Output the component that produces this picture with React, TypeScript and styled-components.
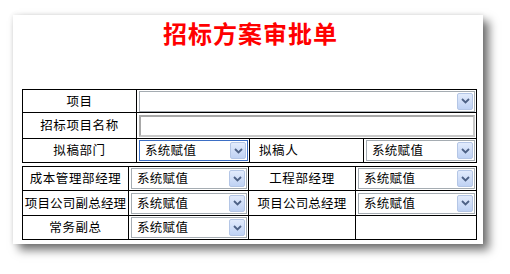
import React from "react";
import styled, { createGlobalStyle } from "styled-components";

const GlobalStyle = createGlobalStyle`
  html, body {
    margin: 0;
    padding: 0;
    background: #ffffff;
  }
  body {
    font-family: "Noto Sans CJK SC", "DejaVu Sans", sans-serif;
    font-size: 13px;
    color: #000;
  }
`;

const Page = styled.div`
  width: 510px;
  height: 274px;
  padding: 15px 0 0 13px;
  box-sizing: border-box;
`;

const Card = styled.div`
  width: 470px;
  height: 229px;
  background: #ffffff;
  box-sizing: border-box;
  padding: 0 0 0 9px;
  box-shadow: 0 0 5px rgba(0, 0, 0, 0.12), 6px 6px 9px rgba(0, 0, 0, 0.55);
`;

const Title = styled.div`
  height: 74px;
  padding: 2px 4px 0 0;
  box-sizing: border-box;
  text-align: center;
  color: #ff0000;
  font-size: 24px;
  font-weight: bold;
  line-height: 32px;
  letter-spacing: 1px;
  font-family: "Noto Sans CJK SC", serif;
`;

const Grid = styled.div<{ $cols: string; $rows: string }>`
  display: grid;
  grid-template-columns: ${(p) => p.$cols};
  grid-template-rows: ${(p) => p.$rows};
  width: 455px;
  box-sizing: border-box;
  border-top: 1px solid #000;
  border-left: 1px solid #000;
  & + & {
    margin-top: 3px;
  }
`;

const Cell = styled.div<{ $span?: number }>`
  grid-column: span ${(p) => p.$span ?? 1};
  border-right: 1px solid #000;
  border-bottom: 1px solid #000;
  display: flex;
  align-items: center;
  min-width: 0;
`;

const Label = styled(Cell)<{ $tight?: boolean; $left?: boolean }>`
  justify-content: ${(p) => (p.$left ? "flex-start" : "center")};
  padding-left: ${(p) => (p.$left ? "9px" : "0")};
  white-space: nowrap;
  font-size: 12.5px;
  letter-spacing: ${(p) => (p.$tight ? "0.2px" : "0.6px")};
  line-height: 1;
`;

const Field = styled(Cell)`
  padding: 1px 1px 1px 2px;
  box-sizing: border-box;
`;

const SelectBox = styled.div<{ $focused?: boolean }>`
  flex: 1;
  height: 21px;
  box-sizing: border-box;
  border: 1px solid ${(p) => (p.$focused ? "#3d6fc5" : "#a5acb2")};
  background: #fff;
  display: flex;
  align-items: center;
  padding: 0 1px 0 5px;
`;

const SelectText = styled.span`
  flex: 1;
  white-space: nowrap;
  font-size: 12.5px;
  letter-spacing: 0.3px;
  line-height: 1;
`;

const DropButton = styled.div`
  width: 16px;
  height: 17px;
  box-sizing: border-box;
  border: 1px solid #b4c6e6;
  border-radius: 2px;
  background: linear-gradient(#e2ebfc, #bfd2f4);
  display: flex;
  align-items: center;
  justify-content: center;
`;

const TextInput = styled.div`
  flex: 1;
  height: 22px;
  box-sizing: border-box;
  border: 2px solid #c8c8c8;
  border-top-color: #a8a8a8;
  border-left-color: #a8a8a8;
  background: #fff;
`;

const Chevron = () => (
  <svg width="9" height="6" viewBox="0 0 9 6">
    <path d="M1 1 L4.5 4.5 L8 1" fill="none" stroke="#4d6185" strokeWidth="1.8" />
  </svg>
);

const Select = ({ value, focused }: { value?: string; focused?: boolean }) => (
  <SelectBox $focused={focused}>
    <SelectText>{value}</SelectText>
    <DropButton>
      <Chevron />
    </DropButton>
  </SelectBox>
);

const V = "系统赋值";

export default function App() {
  return (
    <Page>
      <GlobalStyle />
      <Card>
        <Title>招标方案审批单</Title>
        <Grid $cols="114px 113px 114px 113px" $rows="23px 26px 24px">
          <Label>项目</Label>
          <Field $span={3}>
            <Select />
          </Field>
          <Label>招标项目名称</Label>
          <Field $span={3}>
            <TextInput />
          </Field>
          <Label>拟稿部门</Label>
          <Field>
            <Select value={V} focused />
          </Field>
          <Label $left>拟稿人</Label>
          <Field>
            <Select value={V} />
          </Field>
        </Grid>
        <Grid $cols="106px 120px 107px 121px" $rows="24px 25px 24px">
          <Label>成本管理部经理</Label>
          <Field>
            <Select value={V} />
          </Field>
          <Label>工程部经理</Label>
          <Field>
            <Select value={V} />
          </Field>
          <Label $tight>项目公司副总经理</Label>
          <Field>
            <Select value={V} />
          </Field>
          <Label $tight>项目公司总经理</Label>
          <Field>
            <Select value={V} />
          </Field>
          <Label>常务副总</Label>
          <Field>
            <Select value={V} />
          </Field>
          <Cell />
          <Cell />
        </Grid>
      </Card>
    </Page>
  );
}
